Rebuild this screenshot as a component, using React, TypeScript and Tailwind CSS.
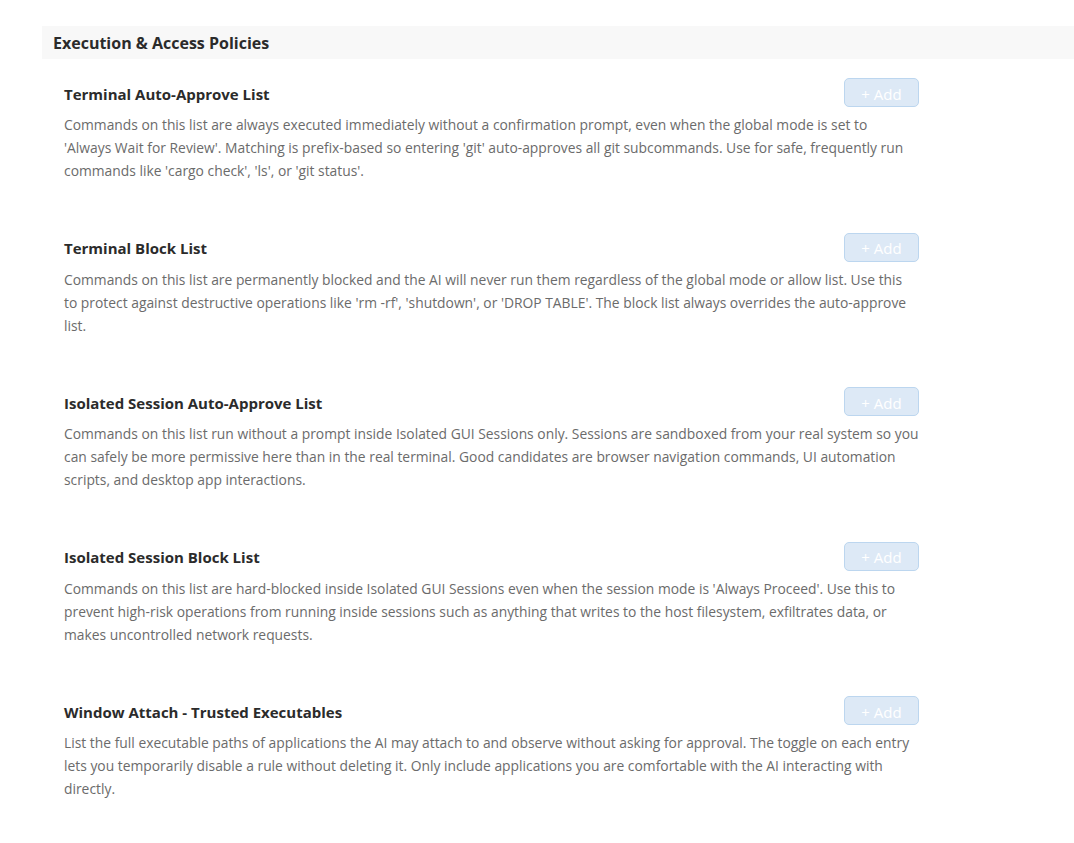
const policies = [
  {
    title: 'Terminal Auto-Approve List',
    text: "Commands on this list are always executed immediately without a confirmation prompt, even when the global mode is set to 'Always\u00a0Wait for Review'. Matching is prefix-based so entering 'git' auto-approves all git subcommands. Use for safe, frequently run commands like 'cargo check', 'ls', or 'git status'.",
  },
  {
    title: 'Terminal Block List',
    text: "Commands on this list are permanently blocked and the AI will never run them regardless of the global mode or allow list. Use this to protect against destructive operations like 'rm -rf', 'shutdown', or 'DROP TABLE'. The block list always overrides the auto-approve list.",
  },
  {
    title: 'Isolated Session Auto-Approve List',
    text: 'Commands on this list run without a prompt inside Isolated GUI Sessions only. Sessions are sandboxed from your real system so you can safely be more permissive here than in the real terminal. Good candidates are browser navigation commands, UI automation scripts, and desktop app interactions.',
  },
  {
    title: 'Isolated Session Block List',
    text: "Commands on this list are hard-blocked inside Isolated GUI Sessions even when the session mode is 'Always Proceed'. Use this to prevent high-risk operations from running inside sessions such as anything that writes to the host filesystem, exfiltrates data, or makes uncontrolled network requests.",
  },
  {
    title: 'Window Attach - Trusted Executables',
    text: 'List the full executable paths of applications the AI may attach to and observe without asking for approval. The toggle on each entry lets you temporarily disable a rule without deleting it. Only include applications you are comfortable with the AI interacting with directly.',
  },
];

function PolicySection({ title, text }: { title: string; text: string }) {
  return (
    <div className="h-[154.5px]">
      <div className="flex items-center justify-between h-[29px]">
        <h3 className="pt-[3px] text-[15px] font-bold text-[#2b2b2b]">{title}</h3>
        <button
          type="button"
          disabled
          className="w-[75px] h-[29px] pt-[3px] rounded-[5px] border border-[#bcd6ef] bg-[#dde9f6] text-[15px] text-white"
        >
          + Add
        </button>
      </div>
      <p className="mt-[6px] text-[13.85px] leading-[23px] text-[#6b6b6b]">{text}</p>
    </div>
  );
}

export default function App() {
  return (
    <div
      className="min-h-screen bg-white pt-[26px]"
      style={{ fontFamily: '"Open Sans", "Noto Sans", sans-serif' }}
    >
      <div className="ml-[42px] h-[33px] flex items-center pl-[11px] bg-[#f8f8f8]">
        <h2 className="text-[16px] font-bold text-[#2b2b2b]">Execution &amp; Access Policies</h2>
      </div>
      <div className="ml-[64px] w-[855px] mt-[19px]">
        {policies.map((p) => (
          <PolicySection key={p.title} title={p.title} text={p.text} />
        ))}
      </div>
    </div>
  );
}
